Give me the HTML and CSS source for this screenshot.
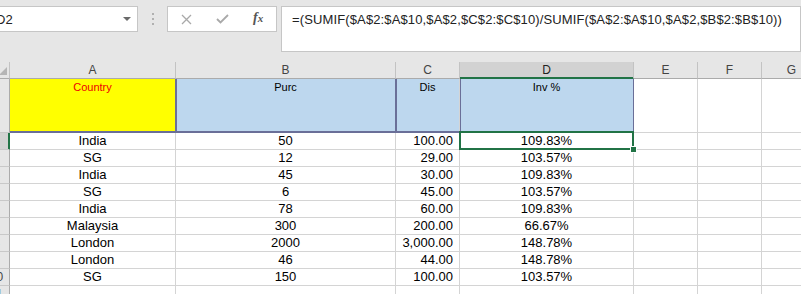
FILE: index.html
```html
<!DOCTYPE html>
<html lang="en">

<head>
    <title>Sheet1</title>
    <meta charset="UTF-8">
    <meta name="viewport" content="width=device-width, initial-scale=1">
    <link rel="stylesheet" href="styles.css">
</head>

<body>
    <div class="formulabar">
        <div class="namebox">
            <span>D2</span>
            <span class="arrow"></span>
        </div>
        <div class="grip"><i></i><i></i><i></i></div>
        <div class="fxbox">
            <span class="fxbtn">
                <svg width="11" height="11" viewBox="0 0 11 11"><path d="M1 1L10 10M10 1L1 10" stroke="#a9a9a9" stroke-width="1.3" fill="none"/></svg>
            </span>
            <span class="fxbtn">
                <svg width="13" height="10" viewBox="0 0 13 10"><path d="M1 5L4.5 8.5L12 1" stroke="#a9a9a9" stroke-width="1.8" fill="none"/></svg>
            </span>
            <span class="fxbtn fx">f<small>x</small></span>
        </div>
        <div class="formula">=(SUMIF($A$2:$A$10,$A$2,$C$2:$C$10)/SUMIF($A$2:$A$10,$A$2,$B$2:$B$10))</div>
    </div>

    <div class="sheet">
        <!-- column headers -->
        <div class="ch corner"><span class="tri"></span></div>
        <div class="ch">A</div>
        <div class="ch">B</div>
        <div class="ch">C</div>
        <div class="ch sel">D</div>
        <div class="ch">E</div>
        <div class="ch">F</div>
        <div class="ch">G</div>

        <!-- row 1 -->
        <div class="rh">1</div>
        <div class="c head yellow">Country</div>
        <div class="c head blue edge">Purc</div>
        <div class="c head blue edge">Dis</div>
        <div class="c head blue edge">Inv %</div>
        <div class="c"></div>
        <div class="c"></div>
        <div class="c"></div>

        <!-- row 2 -->
        <div class="rh sel">2</div>
        <div class="c mid">India</div>
        <div class="c mid">50</div>
        <div class="c num">100.00</div>
        <div class="c mid active">109.83%<span class="selbox"></span><span class="handle"></span></div>
        <div class="c"></div>
        <div class="c"></div>
        <div class="c"></div>

        <div class="rh">3</div>
        <div class="c mid">SG</div>
        <div class="c mid">12</div>
        <div class="c num">29.00</div>
        <div class="c mid">103.57%</div>
        <div class="c"></div>
        <div class="c"></div>
        <div class="c"></div>

        <div class="rh">4</div>
        <div class="c mid">India</div>
        <div class="c mid">45</div>
        <div class="c num">30.00</div>
        <div class="c mid">109.83%</div>
        <div class="c"></div>
        <div class="c"></div>
        <div class="c"></div>

        <div class="rh">5</div>
        <div class="c mid">SG</div>
        <div class="c mid">6</div>
        <div class="c num">45.00</div>
        <div class="c mid">103.57%</div>
        <div class="c"></div>
        <div class="c"></div>
        <div class="c"></div>

        <div class="rh">6</div>
        <div class="c mid">India</div>
        <div class="c mid">78</div>
        <div class="c num">60.00</div>
        <div class="c mid">109.83%</div>
        <div class="c"></div>
        <div class="c"></div>
        <div class="c"></div>

        <div class="rh">7</div>
        <div class="c mid">Malaysia</div>
        <div class="c mid">300</div>
        <div class="c num">200.00</div>
        <div class="c mid">66.67%</div>
        <div class="c"></div>
        <div class="c"></div>
        <div class="c"></div>

        <div class="rh">8</div>
        <div class="c mid">London</div>
        <div class="c mid">2000</div>
        <div class="c num">3,000.00</div>
        <div class="c mid">148.78%</div>
        <div class="c"></div>
        <div class="c"></div>
        <div class="c"></div>

        <div class="rh">9</div>
        <div class="c mid">London</div>
        <div class="c mid">46</div>
        <div class="c num">44.00</div>
        <div class="c mid">148.78%</div>
        <div class="c"></div>
        <div class="c"></div>
        <div class="c"></div>

        <div class="rh">10</div>
        <div class="c mid">SG</div>
        <div class="c mid">150</div>
        <div class="c num">100.00</div>
        <div class="c mid">103.57%</div>
        <div class="c"></div>
        <div class="c"></div>
        <div class="c"></div>

        <div class="rh">11</div>
        <div class="c"></div>
        <div class="c"></div>
        <div class="c"></div>
        <div class="c"></div>
        <div class="c"></div>
        <div class="c"></div>
        <div class="c"></div>
    </div>
</body>

</html>
```

FILE: styles.css
```css
* {
    box-sizing: border-box;
}

body {
    margin: 0;
    width: 801px;
    height: 294px;
    overflow: hidden;
    background: #e6e6e6;
    font-family: "Liberation Sans", Arial, sans-serif;
    font-size: 13px;
    color: #000;
}

/* formula bar */
.formulabar {
    display: flex;
    align-items: flex-start;
    height: 62px;
    padding-top: 6px;
}

.namebox {
    display: flex;
    align-items: center;
    justify-content: space-between;
    width: 170px;
    height: 26px;
    margin-left: -20px;
    padding: 0 6px 0 15px;
    background: #fff;
    border: 1px solid #c6c6c6;
    color: #222;
}

.arrow {
    width: 0;
    height: 0;
    border-left: 4px solid transparent;
    border-right: 4px solid transparent;
    border-top: 4px solid #6a6a6a;
}

.grip {
    display: flex;
    flex-direction: column;
    align-items: center;
    gap: 3px;
    width: 31px;
    padding-top: 7px;
}

.grip i {
    width: 2px;
    height: 2px;
    background: #b0b0b0;
}

.fxbox {
    display: flex;
    width: 110px;
    height: 26px;
    padding-left: 1px;
    background: #fff;
    border: 1px solid #c6c6c6;
}

.fxbtn {
    display: flex;
    align-items: center;
    justify-content: center;
    width: 36px;
}

.fx {
    font-family: "Liberation Serif", "Times New Roman", serif;
    font-style: italic;
    font-weight: bold;
    font-size: 14px;
    color: #555;
    padding-bottom: 2px;
}

.fx small {
    font-size: 11px;
}

.formula {
    flex: none;
    width: 520px;
    height: 46px;
    margin-left: 4px;
    padding: 5px 0 0 10px;
    background: #fff;
    border: 1px solid #c6c6c6;
    line-height: 16px;
    letter-spacing: 0.13px;
    color: #222;
    white-space: nowrap;
}

/* grid */
.sheet {
    display: grid;
    grid-template-columns: 26px 166px 220px 64px 174px 64px 64px 60px;
    grid-template-rows: 17px 54px repeat(9, 17px) 17px;
    margin-left: -16px;
    background: #fff;
}

.ch {
    display: flex;
    align-items: center;
    justify-content: center;
    background: #e6e6e6;
    border-right: 1px solid #c3c3c3;
    border-bottom: 1px solid #ababab;
    color: #444;
    font-size: 12px;
}

.ch.sel {
    background: #d2d2d2;
    border-bottom-color: #217346;
    box-shadow: inset 0 -1px 0 #217346;
    color: #222;
}

.corner {
    position: relative;
}

.tri {
    position: absolute;
    right: 2px;
    bottom: 3px;
    width: 0;
    height: 0;
    border-left: 8px solid transparent;
    border-bottom: 8px solid #b5b5b5;
}

.rh {
    display: flex;
    align-items: center;
    justify-content: center;
    background: #e6e6e6;
    border-right: 1px solid #ababab;
    border-bottom: 1px solid #c8c8c8;
    color: #444;
    font-size: 12px;
}

.rh.sel {
    background: #d2d2d2;
    border-right-color: #217346;
    box-shadow: inset -1px 0 0 #217346;
}

.c {
    border-right: 1px solid #d4d4d4;
    border-bottom: 1px solid #d4d4d4;
    line-height: 16px;
    white-space: nowrap;
}

.mid {
    text-align: center;
}

.num {
    text-align: right;
    padding-right: 6px;
}

.head {
    padding-top: 2px;
    font-size: 11px;
    line-height: 13px;
    text-align: center;
    border-bottom: 2px solid #6a6f98;
}

.yellow {
    background: #ffff00;
    color: #ee0000;
    border-right-color: #6a6f98;
}

.blue {
    background: #bdd7ee;
}

.edge {
    box-shadow: inset 1px 0 0 #6a6f98;
}

.blue.edge {
    border-right-color: #6a6f98;
}

.blue.edge:nth-child(12) {
    border-right-color: #d4d4d4;
}

.active {
    position: relative;
}

.selbox {
    position: absolute;
    left: -1px;
    top: -2px;
    right: -1px;
    bottom: -1px;
    border: 2px solid #217346;
}

.handle {
    position: absolute;
    right: -4px;
    bottom: -4px;
    width: 7px;
    height: 7px;
    background: #217346;
    border: 1px solid #fff;
}
```
